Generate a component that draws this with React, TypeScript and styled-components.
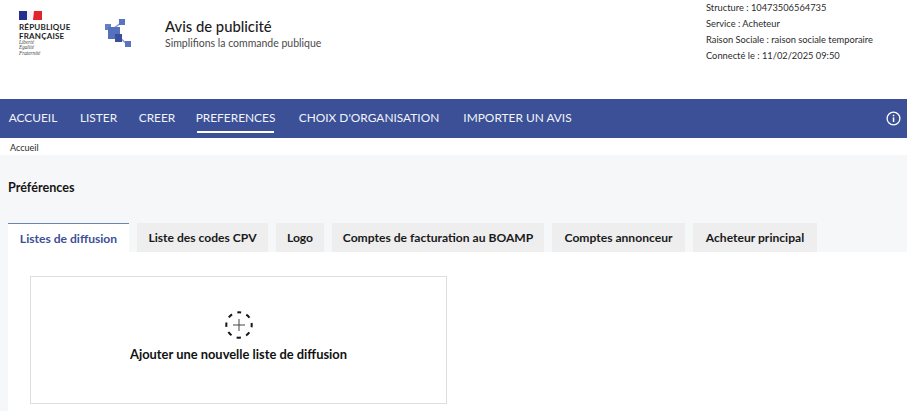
import React from 'react'
import styled, { createGlobalStyle } from 'styled-components'

const GlobalStyle = createGlobalStyle`
    html, body {
        margin: 0;
        padding: 0;
        background: #f6f7f9;
        overflow: hidden;
    }
    body {
        font-family: 'Lato', 'Open Sans', sans-serif;
        color: #161616;
    }
`

const Page = styled.div`
    width: 907px;
    height: 411px;
    overflow: hidden;
    display: flex;
    flex-direction: column;
`

const Header = styled.header`
    height: 99px;
    background: #fff;
    display: flex;
    align-items: flex-start;
    flex-shrink: 0;
`

const Marianne = styled.div`
    width: 105px;
    padding: 11px 0 0 19px;
    box-sizing: border-box;
    display: flex;
    flex-direction: column;
    flex-shrink: 0;
`

const RepublicName = styled.div`
    margin-top: 3px;
    font-size: 8px;
    line-height: 8.5px;
    font-weight: 700;
    letter-spacing: 0.2px;
    color: #1e1e1e;
`

const Motto = styled.div`
    margin-top: 0;
    font-family: 'Liberation Serif', serif;
    font-style: italic;
    font-size: 5.2px;
    line-height: 5.3px;
    color: #444;
`

const LogoSlot = styled.div`
    padding-top: 19px;
    flex-shrink: 0;
`

const Heading = styled.div`
    margin-left: 33px;
    padding-top: 17px;
    flex: 1;
`

const AppTitle = styled.div`
    font-size: 14.8px;
    line-height: 19px;
    font-weight: 500;
    color: #1c1c1c;
`

const AppSubtitle = styled.div`
    margin-top: 0;
    font-size: 10.5px;
    line-height: 14px;
    color: #4a4a4a;
`

const AccountInfo = styled.div`
    width: 201px;
    flex-shrink: 0;
    display: flex;
    flex-direction: column;
    font-size: 9.3px;
    line-height: 16px;
    color: #2b2b2b;
`

const Nav = styled.nav`
    height: 39px;
    flex-shrink: 0;
    background: #3b5096;
    display: flex;
    align-items: stretch;
    padding: 0 6px 0 8px;
    gap: 22px;
`

const NavItem = styled.div<{ $active?: boolean; $width: number }>`
    width: ${(props) => props.$width}px;
    display: flex;
    align-items: center;
    justify-content: center;
    white-space: nowrap;
    height: 34px;
    padding-top: 4px;
    box-sizing: border-box;
    font-size: 11.9px;
    color: #f2f4fa;
    border-bottom: 2px solid ${(props) => (props.$active ? '#fff' : 'transparent')};
`

const InfoButton = styled.div`
    margin-left: auto;
    display: flex;
    align-items: center;
`

const Breadcrumb = styled.div`
    height: 17px;
    flex-shrink: 0;
    background: #fff;
    padding-left: 10px;
    font-size: 9px;
    line-height: 19px;
    color: #2a2a2a;
`

const Main = styled.main`
    flex: 1;
    padding: 24px 0 0 8px;
    display: flex;
    flex-direction: column;
`

const PageTitle = styled.h1`
    margin: 0;
    font-size: 12.6px;
    line-height: 17px;
    font-weight: 700;
    color: #161616;
`

const Tabs = styled.div`
    margin-top: 27px;
    display: flex;
    gap: 8px;
`

const Tab = styled.div<{ $active?: boolean; $width: number }>`
    width: ${(props) => props.$width}px;
    height: 29px;
    box-sizing: border-box;
    display: flex;
    align-items: center;
    justify-content: center;
    font-size: 12.1px;
    font-weight: 700;
    color: ${(props) => (props.$active ? '#3b5096' : '#1a1a1a')};
    background: ${(props) => (props.$active ? '#fff' : '#eeeeee')};
    border-top: ${(props) => (props.$active ? '1px solid #6f82b8' : 'none')};
`

const Panel = styled.section`
    flex: 1;
    background: #fff;
    padding: 24px 0 0 22px;
`

const AddCard = styled.div`
    width: 417px;
    height: 128px;
    box-sizing: border-box;
    border: 1px solid #dedede;
    display: flex;
    flex-direction: column;
    align-items: center;
    padding-top: 34px;
`

const AddLabel = styled.div`
    margin-top: 7px;
    font-size: 12.9px;
    line-height: 16px;
    font-weight: 700;
    color: #111;
`

const FlagIcon = () => (
    <svg width="23" height="9" viewBox="0 0 23 9">
        <path d="M0 0h8v9H0z" fill="#24308f" />
        <path d="M8 0h7v9H8z" fill="#f4f4f8" />
        <path d="M15 0h8v9h-9z" fill="#e1222f" />
    </svg>
)

const LogoMark = () => (
    <svg width="27" height="30" viewBox="0 0 27 30">
        <path d="M8 10 L17 3 M14 18 L23 26" stroke="#7f93d0" strokeWidth="1.5" />
        <rect x="14" y="0" width="6" height="6" fill="#5a74bf" />
        <rect x="0" y="5" width="6" height="6" fill="#6680c8" />
        <rect x="3" y="8" width="12" height="12" fill="#5570bd" />
        <rect x="10" y="15" width="7" height="8" fill="#3a4f9b" />
        <rect x="20" y="22" width="6" height="6" fill="#5a74bf" />
    </svg>
)

const InfoIcon = () => (
    <svg width="15" height="15" viewBox="0 0 15 15" fill="none">
        <circle cx="7.5" cy="7.5" r="6.4" stroke="#fff" strokeWidth="1.3" />
        <rect x="6.8" y="6.4" width="1.5" height="4.6" fill="#fff" />
        <rect x="6.8" y="3.8" width="1.5" height="1.5" fill="#fff" />
    </svg>
)

const AddIcon = () => (
    <svg width="28" height="28" viewBox="0 0 28 28" fill="none">
        <circle cx="14" cy="14" r="12.7" stroke="#161616" strokeWidth="2" strokeDasharray="4.4 5.57" strokeDashoffset="2.2" transform="rotate(-90 14 14)" />
        <path d="M14 8v12M8 14h12" stroke="#444" strokeWidth="1" />
    </svg>
)

const navItems = [
    { label: 'ACCUEIL', width: 50 },
    { label: 'LISTER', width: 37 },
    { label: 'CREER', width: 36 },
    { label: 'PREFERENCES', width: 77 },
    { label: "CHOIX D'ORGANISATION", width: 146 },
    { label: 'IMPORTER UN AVIS', width: 107 },
]

const tabs = [
    { label: 'Listes de diffusion', width: 121 },
    { label: 'Liste des codes CPV', width: 131 },
    { label: 'Logo', width: 48 },
    { label: 'Comptes de facturation au BOAMP', width: 212 },
    { label: 'Comptes annonceur', width: 133 },
    { label: 'Acheteur principal', width: 124 },
]

const App: React.FC = (): JSX.Element => {
    return (
        <Page>
            <GlobalStyle />
            <Header>
                <Marianne>
                    <FlagIcon />
                    <RepublicName>
                        RÉPUBLIQUE
                        <br />
                        FRANÇAISE
                    </RepublicName>
                    <Motto>
                        Liberté
                        <br />
                        Égalité
                        <br />
                        Fraternité
                    </Motto>
                </Marianne>
                <LogoSlot>
                    <LogoMark />
                </LogoSlot>
                <Heading>
                    <AppTitle>Avis de publicité</AppTitle>
                    <AppSubtitle>Simplifions la commande publique</AppSubtitle>
                </Heading>
                <AccountInfo>
                    <div>Structure : 10473506564735</div>
                    <div>Service : Acheteur</div>
                    <div>Raison Sociale : raison sociale temporaire</div>
                    <div>Connecté le : 11/02/2025 09:50</div>
                </AccountInfo>
            </Header>
            <Nav>
                {navItems.map((item) => (
                    <NavItem key={item.label} $active={item.label === 'PREFERENCES'} $width={item.width}>
                        {item.label}
                    </NavItem>
                ))}
                <InfoButton>
                    <InfoIcon />
                </InfoButton>
            </Nav>
            <Breadcrumb>Accueil</Breadcrumb>
            <Main>
                <PageTitle>Préférences</PageTitle>
                <Tabs>
                    {tabs.map((tab, index) => (
                        <Tab key={tab.label} $active={index === 0} $width={tab.width}>
                            {tab.label}
                        </Tab>
                    ))}
                </Tabs>
                <Panel>
                    <AddCard>
                        <AddIcon />
                        <AddLabel>Ajouter une nouvelle liste de diffusion</AddLabel>
                    </AddCard>
                </Panel>
            </Main>
        </Page>
    )
}

export default App
